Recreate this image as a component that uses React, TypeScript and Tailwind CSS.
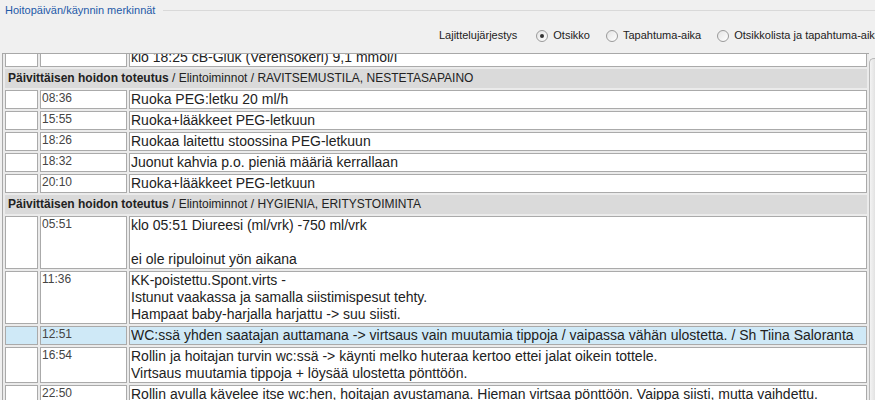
import React, { useLayoutEffect, useRef } from 'react';

type Row =
  | { kind: 'header'; title: string; path: string }
  | { kind: 'entry'; time: string; lines: string[]; selected?: boolean };

const rows: Row[] = [
  { kind: 'entry', time: '', lines: ['klo 18:25 cB-Gluk (Verensokeri) 9,1 mmol/l'] },
  { kind: 'header', title: 'Päivittäisen hoidon toteutus', path: ' / Elintoiminnot / RAVITSEMUSTILA, NESTETASAPAINO' },
  { kind: 'entry', time: '08:36', lines: ['Ruoka PEG:letku 20 ml/h'] },
  { kind: 'entry', time: '15:55', lines: ['Ruoka+lääkkeet PEG-letkuun'] },
  { kind: 'entry', time: '18:26', lines: ['Ruokaa laitettu stoossina PEG-letkuun'] },
  { kind: 'entry', time: '18:32', lines: ['Juonut kahvia p.o. pieniä määriä kerrallaan'] },
  { kind: 'entry', time: '20:10', lines: ['Ruoka+lääkkeet PEG-letkuun'] },
  { kind: 'header', title: 'Päivittäisen hoidon toteutus', path: ' / Elintoiminnot / HYGIENIA, ERITYSTOIMINTA' },
  { kind: 'entry', time: '05:51', lines: ['klo 05:51 Diureesi (ml/vrk) -750 ml/vrk', '', 'ei ole ripuloinut yön aikana'] },
  {
    kind: 'entry',
    time: '11:36',
    lines: ['KK-poistettu.Spont.virts -', 'Istunut vaakassa ja samalla siistimispesut tehty.', 'Hampaat baby-harjalla harjattu -> suu siisti.'],
  },
  {
    kind: 'entry',
    time: '12:51',
    selected: true,
    lines: ['WC:ssä yhden saatajan auttamana -> virtsaus vain muutamia tippoja / vaipassa vähän ulostetta. / Sh Tiina Saloranta'],
  },
  {
    kind: 'entry',
    time: '16:54',
    lines: ['Rollin ja hoitajan turvin wc:ssä -> käynti melko huteraa kertoo ettei jalat oikein tottele.', 'Virtsaus muutamia tippoja + löysää ulostetta pönttöön.'],
  },
  {
    kind: 'entry',
    time: '22:50',
    lines: ['Rollin avulla kävelee itse wc:hen, hoitajan avustamana. Hieman virtsaa pönttöön. Vaippa siisti, mutta vaihdettu.', 'Yöllä rauhallinen.'],
  },
];

const Radio = ({ checked, label }: { checked?: boolean; label: string }) => (
  <label className="flex items-center gap-[5px] whitespace-nowrap">
    <span className="flex h-[12px] w-[12px] shrink-0 items-center justify-center rounded-full border border-[#9a9a9a] bg-gradient-to-br from-[#e4e4e4] to-[#ffffff]">
      {checked && <span className="h-[4px] w-[4px] rounded-full bg-[#333]" />}
    </span>
    <span>{label}</span>
  </label>
);

export default function App() {
  const scrollRef = useRef<HTMLDivElement>(null);

  useLayoutEffect(() => {
    if (scrollRef.current) scrollRef.current.scrollTop = 8;
  }, []);

  return (
    <div className="flex h-[400px] w-[875px] flex-col overflow-hidden bg-[#f0f0f0] font-['Liberation_Sans',Arial,sans-serif]">
      {/* Legend */}
      <div className="flex h-[20px] shrink-0 items-center pl-[5px]">
        <span className="text-[11px] text-[#1e5aa8]">Hoitopäivän/käynnin merkinnät</span>
        <div className="ml-[8px] h-px flex-1 bg-[#d9d9d9]" />
      </div>

      {/* Sort options */}
      <div className="flex h-[31px] shrink-0 items-center pl-[439px] text-[11px] text-[#222]">
        <span className="mr-[19px]">Lajittelujärjestys</span>
        <div className="flex items-center gap-[16px]">
          <Radio checked label="Otsikko" />
          <Radio label="Tapahtuma-aika" />
          <Radio label="Otsikkolista ja tapahtuma-aika" />
        </div>
      </div>

      {/* List */}
      <div className="mt-[2px] flex min-h-0 flex-1">
        <div ref={scrollRef} className="ml-[2px] flex-1 overflow-hidden border-l border-t border-[#a8a8a8] bg-[#ebebeb]">
          <table className="w-full table-fixed border-separate border-spacing-[2px]">
            <colgroup>
              <col className="w-[33px]" />
              <col className="w-[87px]" />
              <col />
            </colgroup>
            <tbody>
              {rows.map((row, i) =>
                row.kind === 'header' ? (
                  <tr key={i}>
                    <td
                      colSpan={3}
                      className="h-[19px] border border-[#dadada] bg-[#dadada] px-[2px] align-middle text-[12px] leading-[17px] text-[#222] whitespace-nowrap"
                    >
                      <span className="font-bold">{row.title}</span>
                      {row.path}
                    </td>
                  </tr>
                ) : (
                  <tr key={i}>
                    <td className={`border border-[#aaaaaa] ${row.selected ? 'bg-[#cfe9f7]' : 'bg-white'}`} />
                    <td
                      className={`border border-[#aaaaaa] px-[1px] align-top text-[12px] leading-[15px] text-[#444] ${
                        row.selected ? 'bg-[#cfe9f7]' : 'bg-white'
                      }`}
                    >
                      {row.time}
                    </td>
                    <td
                      className={`border border-[#aaaaaa] px-[1px] align-top text-[14px] leading-[17px] text-[#222] ${
                        row.selected ? 'bg-[#cfe9f7]' : 'bg-white'
                      }`}
                    >
                      {row.lines.map((line, j) => (
                        <div key={j} className="h-[17px] overflow-hidden whitespace-nowrap">
                          {line}
                        </div>
                      ))}
                    </td>
                  </tr>
                ),
              )}
            </tbody>
          </table>
        </div>

        {/* Scrollbar */}
        <div className="w-[6px] shrink-0 pt-[5px]">
          <div className="h-full rounded-tl-[5px] border-l border-t border-[#b8b8b8] bg-gradient-to-r from-[#f4f4f4] to-[#e2e2e2]" />
        </div>
      </div>
    </div>
  );
}
